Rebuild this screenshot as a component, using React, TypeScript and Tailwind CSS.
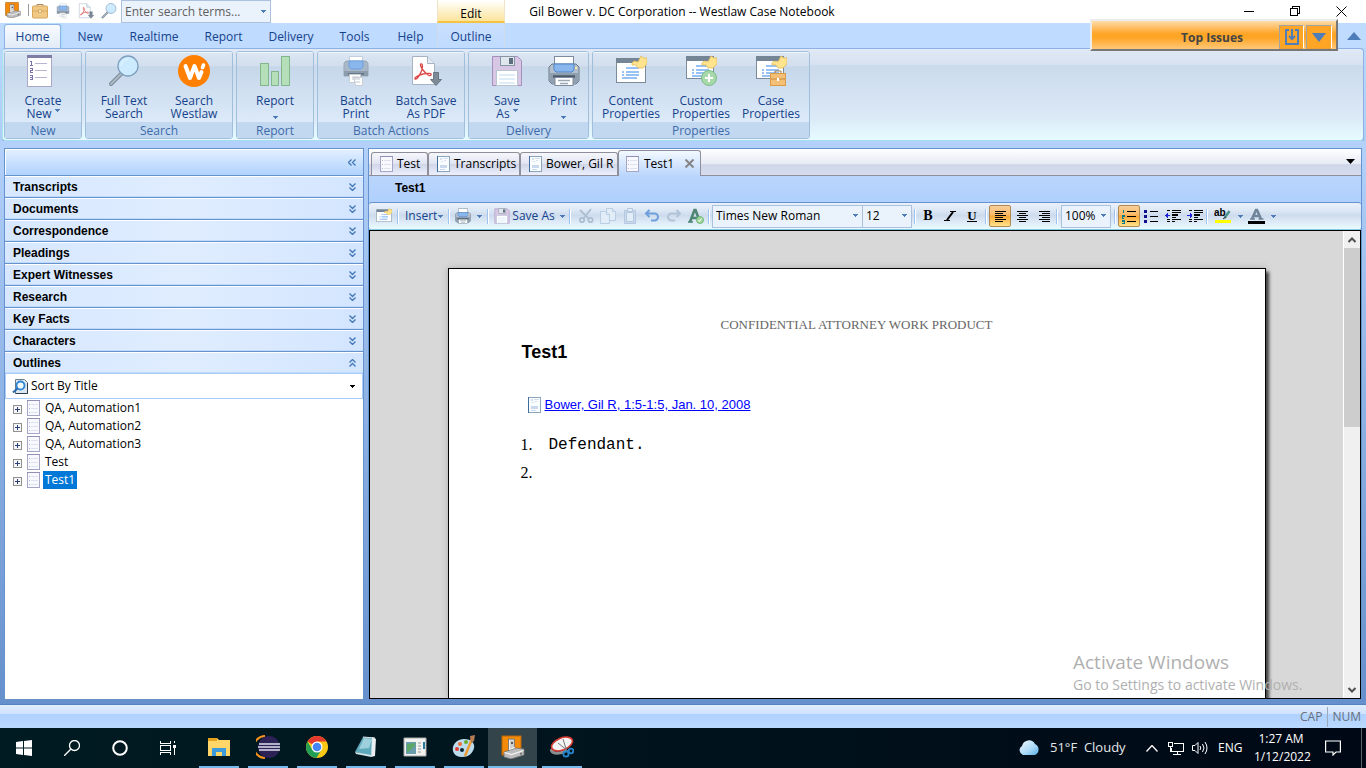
import React from "react";

type IconProps = { className?: string };

const Caret = ({ className = "text-[#4d7cb8]" }: IconProps) => (
  <svg className={`h-[3px] w-[5px] shrink-0 ${className}`} viewBox="0 0 5 3" shapeRendering="crispEdges" fill="currentColor" aria-hidden="true">
    <path d="M0 0h5v1H0zM1 1h3v1H1zM2 2h1v1H2z" />
  </svg>
);

const AppLogo = ({ className = "" }: IconProps) => (
  <svg className={className} viewBox="0 0 24 24" aria-hidden="true">
    <rect x="1" y="1" width="19" height="19" fill="#f58a07" stroke="#b8660a" />
    <rect x="7.500" y="4" width="6" height="12" fill="#cfcfcf" stroke="#6f6f6f" strokeWidth=".8" />
    <path d="M8.500 5v10" stroke="#f4f4f4" />
    <path d="M10 7h2v2h-2z" fill="#555" />
    <path d="M3 17l12-4 8 1v6l-13 4-7-2z" fill="#bdbdbd" stroke="#6f6f6f" strokeWidth=".8" />
    <path d="M3.500 17.500l7 2 12-4M8 14.500l6-2" fill="none" stroke="#f5f5f5" strokeWidth="1.200" />
    <path d="M19 18l2-.6v2l-2 .6z" fill="#777" />
  </svg>
);

const Briefcase = ({ className = "" }: IconProps) => (
  <svg className={className} viewBox="0 0 16 16" aria-hidden="true">
    <path d="M5 3V1.500h6V3" fill="none" stroke="#a8875a" />
    <rect x=".5" y="3" width="15" height="12" rx="1" fill="#f0c987" stroke="#d9a759" />
    <path d="M1 8h14" stroke="#d9a759" />
    <rect x="6.500" y="7" width="3" height="2.500" fill="#fff3d6" stroke="#c9974c" strokeWidth=".7" />
  </svg>
);

const Printer = ({ className = "" }: IconProps) => (
  <svg className={className} viewBox="0 0 32 32" aria-hidden="true">
    <rect x="6.500" y="1.500" width="19" height="10" fill="#fff" stroke="#7b8b9c" />
    <path d="M4 9h24l3 3v14l-3 3H4l-3-3V12z" fill="#b3bfcd" stroke="#6b7a8a" />
    <path d="M6 9h20v6l-2 2H8l-2-2z" fill="#8ab6ee" stroke="#4f83c7" />
    <path d="M1.500 18h29v8l-2.500 2.500H4L1.500 26z" fill="#8f9fb0" />
    <path d="M5 21.500h22" stroke="#4c5a69" strokeWidth="2.500" />
    <rect x="7" y="22.500" width="18" height="8" fill="#fff" stroke="#7b8b9c" />
    <path d="M10 25.500h12M12 28.500h8" stroke="#9aa8b6" strokeWidth="1.500" />
    <path d="M27 12h2v2h-2z" fill="#ffe8a0" />
  </svg>
);

const BatchPrinter = ({ className = "" }: IconProps) => (
  <svg className={className} viewBox="0 0 32 32" aria-hidden="true">
    <path d="M9.500 1.500h13v6h-13z" fill="#fff" stroke="#c3ced9" />
    <path d="M6 6h20l2 2v13H4V8z" fill="#a9b8c8" stroke="#98a8b9" />
    <path d="M9 6h14v6l-2 2H11l-2-2z" fill="#8ab6ee" stroke="#6f9fdc" />
    <path d="M4 16h24v5H4z" fill="#8c9cac" />
    <path d="M8 18h16v2H8z" fill="#68798a" />
    <path d="M9.500 19.500h11v8h-11z" fill="#fff" stroke="#c8ced4" />
    <path d="M13.500 22.500h9v8h-7z" fill="#fff" stroke="#c8ced4" />
    <path d="M12 22h7M12 24h8M14 27h6" stroke="#c0c8d0" />
  </svg>
);

const Magnifier = ({ className = "" }: IconProps) => (
  <svg className={className} viewBox="0 0 32 32" aria-hidden="true">
    <path d="M13 19L3 29" stroke="#7d8c9b" strokeWidth="4" strokeLinecap="round" />
    <path d="M13 19L3 29" stroke="#aebac6" strokeWidth="2" strokeLinecap="round" />
    <circle cx="20" cy="11" r="10" fill="#cdebff" stroke="#7d9ebd" strokeWidth="1.300" />
    <path d="M13 11a7 7 0 0 1 7-7" fill="none" stroke="#e8f6ff" />
  </svg>
);

const PdfDoc = ({ className = "" }: IconProps) => (
  <svg className={className} viewBox="0 0 32 32" aria-hidden="true">
    <path d="M2.500 1.500h15l7 7v21h-22z" fill="#fff" stroke="#a5b3c2" />
    <path d="M17.500 1.500v7h7" fill="#e2ebf4" stroke="#a5b3c2" />
    <path d="M11 9c2-1 2 4 0 8-2 5-5 8-6 7s3-4 8-5 9-1 8 1-5-1-8-5-3-6-2-6z" fill="none" stroke="#dc4545" strokeWidth="1.300" />
    <path d="M23.500 17.500h5v7h3l-5.500 6-5.500-6h3z" fill="#7d8b99" stroke="#596673" strokeWidth=".8" />
  </svg>
);

const NumberedDoc = ({ className = "" }: IconProps) => (
  <svg className={className} viewBox="0 0 32 32" shapeRendering="crispEdges" aria-hidden="true">
    <rect x=".5" y=".5" width="24" height="31" fill="#fff" stroke="#a9a8c5" />
    <rect width="25" height="3" fill="#7e7da6" />
    <path d="M8 8.500h12M8 15.500h12M8 22.500h12" stroke="#b7b6d2" />
    <path d="M4.500 6v4M3 6.500h1M3 10h3M3 13.500h2v2H3.500v2H6M3 20.500h2v2H3M5 22v2H3" fill="none" stroke="#7775a8" />
  </svg>
);

const WestlawMark = ({ className = "" }: IconProps) => (
  <svg className={className} viewBox="0 0 32 32" aria-hidden="true">
    <circle cx="16" cy="16" r="16" fill="#ff8000" />
    <path d="M7.500 11l4.500 12 4.500-12 4.500 12 2.500-6" fill="none" stroke="#fff" strokeWidth="4" strokeLinecap="round" strokeLinejoin="round" />
    <path d="M25.500 10l-1 2.500" stroke="#fff" strokeWidth="3.600" strokeLinecap="round" />
  </svg>
);

const Bars = ({ className = "" }: IconProps) => (
  <svg className={className} viewBox="0 0 32 32" shapeRendering="crispEdges" fill="#b5dfb9" stroke="#82b78b" aria-hidden="true">
    <rect x="1.500" y="8.500" width="8" height="22" />
    <rect x="12.500" y="16.500" width="7" height="14" />
    <rect x="22.500" y="1.500" width="8" height="29" />
  </svg>
);

const Floppy = ({ className = "" }: IconProps) => (
  <svg className={className} viewBox="0 0 32 32" aria-hidden="true">
    <path d="M1.500 1.500h25l4 4v25h-29z" fill="#d7c7e5" stroke="#a58fbc" />
    <rect x="9.500" y="1.500" width="14" height="9" fill="#dfe6ec" stroke="#8796a4" />
    <path d="M18 3h4v6h-4z" fill="#5f6e7c" />
    <rect x="5.500" y="15.500" width="21" height="15" fill="#fff" stroke="#b8c5d3" />
    <path d="M8 20h16M8 24h16M8 28h16" stroke="#bddcf2" />
  </svg>
);

const PropertyWindow = ({ className = "", badge }: IconProps & { badge?: "plus" | "case" }) => (
  <svg className={className} viewBox="0 0 32 32" aria-hidden="true">
    <rect x="1.500" y={badge ? 1.5 : 3.5} width={badge ? 27 : 29} height={badge ? 22 : 24} fill="#fff" stroke="#7b8b9a" />
    <path d={badge ? "M1 1h28v5H1z" : "M1 3h31v5H1z"} fill="#748595" />
    <g transform={badge ? "translate(0 -2)" : undefined}>
      <path d="M11 13h13M11 17h13M11 20h13M7 23h15" stroke="#74aef2" strokeWidth="1.300" />
      <path d="M7 17h2M7 20h2" stroke="#74aef2" strokeWidth="1.300" />
    </g>
    <path d="M17 8l2-2 4 1 3-6 3 2h3v6l-4 4h-5l-2-3h-4z" fill="#ffe38d" stroke="#e1bb58" strokeWidth=".8" />
    {badge === "plus" && (
      <>
        <circle cx="24" cy="23" r="7.500" fill="#a8d9ab" stroke="#7cba85" />
        <path d="M24 19v8M20 23h8" stroke="#fff" strokeWidth="2" />
      </>
    )}
    {badge === "case" && (
      <>
        <path d="M20 18v-2h6v2" fill="none" stroke="#9a7c50" />
        <rect x="15.500" y="18.500" width="15" height="12" fill="#f4c078" stroke="#d99b46" />
        <path d="M16 24h14" stroke="#c98c3b" />
        <path d="M22 23h2v3h-2z" fill="#fff" />
      </>
    )}
  </svg>
);

const OutlineDoc = ({ className = "" }: IconProps) => (
  <svg className={className} viewBox="0 0 13 16" shapeRendering="crispEdges" aria-hidden="true">
    <rect x=".5" y=".5" width="12" height="15" fill="#f7f9fe" stroke="#a5a5c6" />
    <path d="M0 .5h13" stroke="#9190b4" />
    <path d="M4 4.500h7M4 8.500h7M4 12.500h7" stroke="#dde2f0" />
    <path d="M2 4.500h1M2 8.500h1M2 12.500h1" stroke="#b3b8d6" />
  </svg>
);

const TranscriptDoc = ({ className = "" }: IconProps) => (
  <svg className={className} viewBox="0 0 13 16" shapeRendering="crispEdges" aria-hidden="true">
    <rect x=".5" y=".5" width="12" height="15" fill="#fafdff" stroke="#8ba5bd" />
    <path d="M.5 0v16" stroke="#3f6f9f" />
    <path d="M3 2h2v2H3zM6 2h5v1H6zM4 5h2v1H4zM7 4h2v1H7z" fill="#d5e0ec" />
    <path d="M3 9h7v3H3zM3 13h5v1H3z" fill="#c9d8ec" />
  </svg>
);

const TABS = [
  ["New", "w-[56px]"],
  ["Realtime", "w-[72px]"],
  ["Report", "w-[67px]"],
  ["Delivery", "w-[68px]"],
  ["Tools", "w-[59px]"],
  ["Help", "w-[53px]"],
];

type RibbonItem = { lines: string[]; icon: React.ReactNode; caret?: "inline" | "below"; width?: string };
const big = "h-8 w-8";
const GROUPS: { name: string; width: string; items: RibbonItem[] }[] = [
  { name: "New", width: "w-[78px]", items: [{ lines: ["Create", "New"], icon: <NumberedDoc className={big} />, caret: "inline" }] },
  {
    name: "Search",
    width: "w-[148px]",
    items: [
      { lines: ["Full Text", "Search"], icon: <Magnifier className={big} /> },
      { lines: ["Search", "Westlaw"], icon: <WestlawMark className={big} /> },
    ],
  },
  { name: "Report", width: "w-[78px]", items: [{ lines: ["Report"], icon: <Bars className={big} />, caret: "below" }] },
  {
    name: "Batch Actions",
    width: "w-[148px]",
    items: [
      { lines: ["Batch", "Print"], icon: <BatchPrinter className={big} /> },
      { lines: ["Batch Save", "As PDF"], icon: <PdfDoc className={big} /> },
    ],
  },
  {
    name: "Delivery",
    width: "w-[121px]",
    items: [
      { lines: ["Save", "As"], icon: <Floppy className={big} />, caret: "inline" },
      { lines: ["Print"], icon: <Printer className={big} />, caret: "below", width: "w-[43px]" },
    ],
  },
  {
    name: "Properties",
    width: "w-[218px]",
    items: [
      { lines: ["Content", "Properties"], icon: <PropertyWindow className={big} /> },
      { lines: ["Custom", "Properties"], icon: <PropertyWindow className={big} badge="plus" /> },
      { lines: ["Case", "Properties"], icon: <PropertyWindow className={big} badge="case" /> },
    ],
  },
];

function TitleBar() {
  return (
    <header className="flex h-[23px] shrink-0 bg-white">
      <div className="flex min-w-0 flex-1">
        <div className="flex w-[437px] shrink-0 items-start pl-[5px]">
          <AppLogo className="mt-[2px] h-4 w-4" />
          <span className="mt-1 mr-[3px] ml-[7px] h-3 w-px bg-[#9a9a9a]" />
          <div className="flex items-center gap-[7px] pt-[3px]">
            <button type="button" aria-label="Open case"><Briefcase className="h-4 w-4" /></button>
            <button type="button" aria-label="Print"><BatchPrinter className="h-4 w-4" /></button>
            <button type="button" aria-label="Save as PDF"><PdfDoc className="h-4 w-4" /></button>
            <button type="button" aria-label="Find"><Magnifier className="h-4 w-4" /></button>
          </div>
          <div className="ml-1 flex h-[23px] w-[150px] items-center border border-[#abc1de] bg-[#eaf2fb] pr-1">
            <input aria-label="Search terms" placeholder="Enter search terms..." className="w-full min-w-0 bg-transparent pl-[3px] text-[12px] outline-none placeholder:text-[#5f5f5f]" />
            <button type="button" aria-label="Search history"><Caret /></button>
          </div>
        </div>
        <div className="flex w-[68px] shrink-0 items-end justify-center border-x border-b-2 border-[#eee3c4] border-b-[#f5c242] bg-linear-to-b from-white to-[#fce49a] text-[12px] leading-[14px] text-black">
          Edit
        </div>
      </div>
      <h1 className="shrink-0 text-[12px] leading-[23px] text-black">Gil Bower v. DC Corporation -- Westlaw Case Notebook</h1>
      <div className="flex flex-1 justify-end pr-[2px]">
        <button type="button" aria-label="Minimize" className="flex w-[46px] items-center justify-center">
          <svg className="h-[11px] w-[11px]" viewBox="0 0 11 11" shapeRendering="crispEdges"><path d="M0 5.500h10" stroke="#000" /></svg>
        </button>
        <button type="button" aria-label="Restore" className="flex w-[46px] items-center justify-center">
          <svg className="h-[11px] w-[11px]" viewBox="0 0 11 11" shapeRendering="crispEdges" fill="none" stroke="#000"><path d="M.5 2.500h7v7h-7zM2.500 2.500v-2h7v7h-2" /></svg>
        </button>
        <button type="button" aria-label="Close" className="flex w-[46px] items-center justify-center">
          <svg className="h-[11px] w-[11px]" viewBox="0 0 11 11" stroke="#000"><path d="M.5 .5l10 10M10.500 .5l-10 10" /></svg>
        </button>
      </div>
    </header>
  );
}

function RibbonTabs() {
  return (
    <nav className="flex h-[25px] shrink-0 bg-[#bfdbff] pl-1 text-[12px] text-[#15428b]">
      <button type="button" className="mt-px mr-px -mb-px w-[57px] rounded-t-[3px] border border-b-0 border-[#8db2e3] bg-linear-to-b from-[#f8fbff] to-[#e0eaf6] shadow-[1px_0_2px_#9edcf5]">Home</button>
      {TABS.map(([label, width]) => (
        <button type="button" key={label} className={`pt-[2px] ${width}`}>{label}</button>
      ))}
      <button type="button" className="w-[68px] border-x border-[#cfdcea] bg-linear-to-b from-[#c9dfff] to-[#bfdbff] pt-[2px]">Outline</button>
      <button type="button" aria-label="Collapse ribbon" className="mr-[5px] ml-auto">
        <svg className="h-2 w-[14px]" viewBox="0 0 14 8"><path d="M7 0l7 8H0z" fill="#4d7cb8" /></svg>
      </button>
    </nav>
  );
}

function Ribbon() {
  return (
    <section className="mx-[2px] flex h-[93px] shrink-0 gap-[3px] rounded-[4px] border border-t-[#8db2e3] border-r-[#8db2e3] border-b-[#a3dcee] border-l-[#a5e5ee] bg-linear-[180deg,#e0e9f5_0%,#d7e2f1_17%,#cbdaec_18%,#dbe9f7_75%,#e6fcff_100%] pt-[2px] pl-px shadow-[0_1px_0_#7da7cd]">
      {GROUPS.map((group) => (
        <div key={group.name} className={`flex h-[88px] shrink-0 flex-col overflow-hidden rounded-[3px] border border-[#9fbfdb] ${group.width}`}>
          <div className="flex flex-1 justify-center bg-linear-[180deg,#dce6f3_0%,#d3dfee_20%,#c6d7ea_21%,#dceaf9_100%] shadow-[inset_0_1px_0_#eef5fc]">
            {group.items.map((item) => (
              <button type="button" key={item.lines.join(" ")} className={`flex flex-col items-center pt-[3px] text-[12px] leading-[13px] whitespace-nowrap text-[#15428b] ${item.width ?? "w-[70px]"}`}>
                {item.icon}
                <span className="mt-[7px] whitespace-pre-line">
                  {item.lines.join("\n")}
                  {item.caret === "inline" && <span className="ml-[3px] inline-block pb-1 align-bottom"><Caret className="mb-1 text-[#4d7cb8]" /></span>}
                </span>
                {item.caret === "below" && <Caret className="mt-[9px] text-[#4d7cb8]" />}
              </button>
            ))}
          </div>
          <div className="h-4 bg-[#c1d8f0] text-center text-[12px] leading-[17px] text-[#3e6aaa]">{group.name}</div>
        </div>
      ))}
    </section>
  );
}

const SECTIONS = ["Transcripts", "Documents", "Correspondence", "Pleadings", "Expert Witnesses", "Research", "Key Facts", "Characters", "Outlines"];
const OUTLINES = ["QA, Automation1", "QA, Automation2", "QA, Automation3", "Test", "Test1"];

function Sidebar() {
  return (
    <aside className="flex w-[360px] shrink-0 flex-col border border-b-0 border-[#6593cf] bg-white">
      <div className="flex h-[26px] shrink-0 items-center justify-end border-t border-l border-white bg-linear-to-b from-[#e3efff] to-[#afd2ff] pr-[7px]">
        <button type="button" aria-label="Collapse sidebar">
          <svg className="h-[7px] w-2" viewBox="0 0 8 7" fill="none" stroke="#4276b5" strokeWidth="1.300"><path d="M3.500 .5l-3 3 3 3M7.500 .5l-3 3 3 3" /></svg>
        </button>
      </div>
      {SECTIONS.map((name) => (
        <button type="button" key={name} className="flex h-[22px] shrink-0 items-center justify-between border-t border-[#6593cf] bg-linear-to-r from-[#d6e7ff] via-[#e0edff] to-[#d3e5ff] pr-[7px] pl-2 text-left font-['Liberation_Sans',sans-serif] text-[12px] font-bold text-black shadow-[inset_0_1px_0_#fff,inset_0_-1px_0_#c2dafa]">
          {name}
          <svg className={name === "Outlines" ? "h-2 w-[7px] rotate-180" : "h-2 w-[7px]"} viewBox="0 0 7 8" fill="none" stroke="#4276b5" strokeWidth="1.300"><path d="M.5 .5l3 3 3-3M.5 4.500l3 3 3-3" /></svg>
        </button>
      ))}
      <button type="button" className="flex h-[26px] shrink-0 items-center border border-[#a9cdfb] pr-[7px] pl-[6px] text-[12px] text-black">
        <svg className="h-4 w-4" viewBox="0 0 16 16" aria-hidden="true">
          <path d="M3.500 1.500h9l3 3v11h-12z" fill="#dce7f2" stroke="#6f7c8a" />
          <path d="M15.500 5v10.500h-12" fill="none" stroke="#2f3d4b" />
          <circle cx="8.500" cy="7.500" r="4" fill="#effaff" stroke="#2b86d4" strokeWidth="1.800" />
          <path d="M5.500 10.500l-4.500 4" stroke="#2b6cae" strokeWidth="2.200" />
        </svg>
        <span className="ml-[3px]">Sort By Title</span>
        <Caret className="ml-auto text-black" />
      </button>
      <ul className="pl-2 text-[12px] text-black">
        {OUTLINES.map((name) => (
          <li key={name} className="flex h-[18px] items-center">
            <button type="button" aria-label={`Expand ${name}`} className="mt-[2px]">
              <svg className="h-[9px] w-[9px]" viewBox="0 0 9 9" shapeRendering="crispEdges"><rect x=".5" y=".5" width="8" height="8" fill="#f6f6f6" stroke="#919191" /><path d="M2 4.500h5M4.500 2v5" stroke="#28407e" /></svg>
            </button>
            <OutlineDoc className="ml-[5px] h-4 w-[13px]" />
            <span className={name === "Test1" ? "ml-[3px] bg-[#0078d7] px-[2px] leading-[18px] text-white" : "ml-[3px] px-[2px] leading-[18px]"}>{name}</span>
          </li>
        ))}
      </ul>
    </aside>
  );
}

const DOC_TABS = [
  { name: "Test", width: "w-[57px]", outline: true },
  { name: "Transcripts", width: "w-[92px]", outline: false },
  { name: "Bower, Gil R", width: "w-[98px]", outline: false },
];

function DocumentTabs() {
  return (
    <div className="flex h-[27px] shrink-0 items-end border-b border-[#8e8f9b] bg-linear-[180deg,#ffffff_0%,#e6eaf5_58%,#ced6e9_60%,#d6dcec_100%] pl-[2px] text-[12px] text-black">
      {DOC_TABS.map((tab) => (
        <button type="button" key={tab.name} className={`flex h-[23px] items-center gap-1 rounded-t-[3px] border border-b-0 border-[#8e8f9b] bg-linear-[180deg,#f5f7fc_0%,#e1e5f2_48%,#cfd5e8_50%,#eceffc_100%] pl-2 whitespace-nowrap ${tab.width}`}>
          {tab.outline ? <OutlineDoc className="h-4 w-[13px] shrink-0" /> : <TranscriptDoc className="h-4 w-[13px] shrink-0" />}
          {tab.name}
        </button>
      ))}
      <div className="-mb-px flex h-[26px] w-[83px] items-center rounded-t-[3px] border border-b-0 border-[#8e8f9b] bg-linear-to-b from-[#f3f9ff] to-[#bad5fc] pl-[7px]">
        <OutlineDoc className="h-4 w-[13px] shrink-0" />
        <span className="ml-[5px]">Test1</span>
        <button type="button" aria-label="Close tab" className="mr-[6px] ml-auto">
          <svg className="h-[9px] w-[9px]" viewBox="0 0 9 9" stroke="#858585" strokeWidth="2"><path d="M.5 .5l8 8M8.500 .5l-8 8" /></svg>
        </button>
      </div>
      <button type="button" aria-label="Tab list" className="mr-[6px] mb-[11px] ml-auto">
        <svg className="h-[5px] w-[9px]" viewBox="0 0 9 5"><path d="M0 0h9L4.500 5z" /></svg>
      </button>
    </div>
  );
}

const Separator = () => <span className="h-[15px] w-[2px] shrink-0 border-r border-white bg-[#9ec3f0]" />;

function Picker({ label, value, width }: { label: string; value: string; width: string }) {
  return (
    <div className={`relative h-[23px] shrink-0 ${width}`}>
      <select aria-label={label} className="h-full w-full appearance-none border border-[#abc1de] bg-[#eaf2fb] pl-[3px] text-[12px] text-black outline-none">
        <option>{value}</option>
      </select>
      <Caret className="pointer-events-none absolute top-[9px] right-[5px] text-[#4d7cb8]" />
    </div>
  );
}

const ALIGN = {
  left: "M0 .5h11M0 2.500h8M0 4.500h11M0 6.500h8M0 8.500h11M0 10.500h8",
  center: "M0 .5h11M2 2.500h7M0 4.500h11M2 6.500h7M0 8.500h11M2 10.500h7",
  right: "M0 .5h11M3 2.500h8M0 4.500h11M3 6.500h8M0 8.500h11M3 10.500h8",
};

const Tool = ({ label, active, children }: { label: string; active?: boolean; children: React.ReactNode }) => (
  <button
    type="button"
    aria-label={label}
    className={
      active
        ? "flex h-[22px] w-[22px] shrink-0 items-center justify-center rounded-[2px] border border-[#b08a52] bg-linear-[180deg,#f7cf9c_0%,#fbb965_45%,#fba536_50%,#ffe58a_100%]"
        : "flex h-[22px] w-[22px] shrink-0 items-center justify-center"
    }
  >
    {children}
  </button>
);

const AlignIcon = ({ d }: { d: string }) => (
  <svg className="h-[11px] w-[11px]" viewBox="0 0 11 11" stroke="#000" shapeRendering="crispEdges"><path d={d} /></svg>
);

const IndentIcon = ({ flip }: { flip?: boolean }) => (
  <svg className="h-[14px] w-4" viewBox="0 0 16 14" shapeRendering="crispEdges">
    <path d="M2 1.500h3M7 1.500h9M7 3.500h9M7 8.500h4M2 10.500h3M7 10.500h9M2 12.500h3M7 12.500h3" stroke="#000" strokeWidth="1" />
    <path d="M7 5h6v2H7z" />
    <path d={flip ? "M0 6h5v1H0zM3 4h1v5H3zM4 5h1v3H4z" : "M0 6h5v1H0zM1 5h1v3H1zM2 4h1v5H2z"} fill="#2020d8" />
  </svg>
);

function EditorToolbar() {
  return (
    <div className="flex h-[28px] shrink-0 items-center overflow-hidden rounded-[3px] border-t border-b border-t-[#6593cf] border-b-[#84cbe0] bg-linear-[180deg,#eaf1fa_0%,#dce7f5_30%,#cddbed_48%,#dfecf8_75%,#e8fbff_100%] text-[12px] text-[#15428b]">
      <div className="flex w-[343px] shrink-0 items-center pl-[7px]">
        <button type="button" aria-label="Properties"><PropertyWindow className="h-4 w-4" /></button>
        <span className="ml-[5px] flex"><Separator /></span>
        <button type="button" className="ml-[6px] flex items-center gap-px">Insert <Caret /></button>
        <span className="ml-[5px] flex"><Separator /></span>
        <button type="button" aria-label="Print" className="ml-[5px] flex items-center gap-[6px]"><Printer className="h-4 w-4" /><Caret /></button>
        <span className="ml-[5px] flex"><Separator /></span>
        <button type="button" className="ml-[5px] flex items-center gap-[2px] whitespace-nowrap"><Floppy className="h-4 w-4" />Save As <Caret className="ml-[3px] text-[#4d7cb8]" /></button>
        <span className="ml-1 flex"><Separator /></span>
        <div className="ml-auto flex gap-[6px] pr-1">
          <button type="button" aria-label="Cut">
            <svg className="h-4 w-4" viewBox="0 0 16 16" fill="none" stroke="#aebfd2" strokeWidth="1.800"><path d="M2 2l9 9M13 1L5 11" /><circle cx="4" cy="12" r="2.200" /><circle cx="12.500" cy="12" r="2.200" /></svg>
          </button>
          <button type="button" aria-label="Copy">
            <svg className="h-4 w-4" viewBox="0 0 16 16" fill="#e3edf8" stroke="#b9cde3"><path d="M6.500 .5h6l3 3v9h-9z" /><path d="M.5 3.500h6l3 3v9h-9z" /><path d="M12.500 .5v3h3M6.500 3.500v3h3" /></svg>
          </button>
          <button type="button" aria-label="Paste">
            <svg className="h-4 w-4" viewBox="0 0 16 16" fill="#e3edf8" stroke="#b4c9e0"><path d="M2.500 2.500h11v13h-11z" fill="#c9d9eb" /><path d="M4.500 4.500h7v9h-7z" /><path d="M5.500 .5h5v3h-5z" /></svg>
          </button>
          <button type="button" aria-label="Undo">
            <svg className="h-4 w-4" viewBox="0 0 16 16" fill="none" stroke="#6f9fdb" strokeWidth="2"><path d="M5.500 2L2 5.500 5.500 9M2 5.500h8.500a3.500 3.500 0 0 1 0 7H7" /></svg>
          </button>
          <button type="button" aria-label="Redo">
            <svg className="h-4 w-4" viewBox="0 0 16 16" fill="none" stroke="#b1c3d7" strokeWidth="2"><path d="M10.500 2L14 5.500 10.500 9M14 5.500H5.500a3.500 3.500 0 0 0 0 7H9" /></svg>
          </button>
          <button type="button" aria-label="Spelling">
            <svg className="h-4 w-4" viewBox="0 0 16 16" fill="none"><path d="M2 14L6.500 2h1L12 14M4 10h6" stroke="#4e8573" strokeWidth="2.600" /><path d="M0 14h5" stroke="#4e8573" strokeWidth="1.500" /><circle cx="12" cy="12" r="3.500" fill="#9ed69c" stroke="#75b97c" /><path d="M10.500 12l1 1.500 2-3" stroke="#fff" /></svg>
          </button>
        </div>
        <span className="flex pr-[2px]"><Separator /></span>
      </div>
      <div className="flex w-[205px] shrink-0 items-center">
        <Picker label="Font" value="Times New Roman" width="w-[151px]" />
        <span className="-ml-px flex"><Picker label="Font size" value="12" width="w-[50px]" /></span>
        <span className="ml-[2px] flex"><Separator /></span>
      </div>
      <div className="flex shrink-0 items-center font-['Liberation_Serif',serif] text-[14px] leading-4 font-bold text-black">
        <Tool label="Bold">B</Tool>
        <Tool label="Italic"><svg className="h-[10px] w-3" viewBox="0 0 12 10" stroke="#000"><path d="M6 .5h6M0 9.500h6" /><path d="M9 1L3 9" strokeWidth="2" /></svg></Tool>
        <Tool label="Underline"><span className="border-b border-black text-[13px] leading-[11px]">U</span></Tool>
        <span className="flex px-[2px]"><Separator /></span>
        <Tool label="Align left" active><AlignIcon d={ALIGN.left} /></Tool>
        <Tool label="Align center"><AlignIcon d={ALIGN.center} /></Tool>
        <Tool label="Align right"><AlignIcon d={ALIGN.right} /></Tool>
      </div>
      <div className="ml-px flex shrink-0 items-center">
        <Separator />
        <span className="mx-[3px] flex"><Picker label="Zoom" value="100%" width="w-[50px]" /></span>
        <Separator />
      </div>
      <div className="ml-[2px] flex shrink-0 items-center">
        <Tool label="Numbered list" active>
          <svg className="h-[15px] w-4" viewBox="0 0 16 15" shapeRendering="crispEdges"><path d="M6 2.500h9M6 7.500h9M6 12.500h9" stroke="#000" /><path d="M1.500 1h1v3M1 6h2v1H1v2h2M1 11h2v1H1h2v2H1" fill="none" stroke="#0b7c8c" /></svg>
        </Tool>
        <Tool label="Bulleted list">
          <svg className="h-[14px] w-[14px]" viewBox="0 0 14 14" shapeRendering="crispEdges"><path d="M6 2.500h8M6 7.500h8M6 12.500h8" stroke="#000" /><path d="M0 1h3v3H0zM0 6h3v3H0zM0 11h3v3H0z" fill="#10108c" /></svg>
        </Tool>
        <Tool label="Decrease indent"><IndentIcon /></Tool>
        <Tool label="Increase indent"><IndentIcon flip /></Tool>
        <Separator />
        <button type="button" aria-label="Highlight colour" className="ml-[6px] flex items-center gap-[6px]">
          <svg className="h-[18px] w-[18px]" viewBox="0 0 18 18"><path d="M1 13h16v3H1z" fill="#ff0" /><text x="0" y="9" fontSize="10" fontFamily="Liberation Sans" fontWeight="bold">ab</text><path d="M10.500 11l5-7" stroke="#4f8f8c" strokeWidth="2.500" /><path d="M9 12l3-2" stroke="#333" /></svg>
          <Caret />
        </button>
        <button type="button" aria-label="Font colour" className="ml-[5px] flex items-center gap-[6px]">
          <svg className="h-[18px] w-[17px]" viewBox="0 0 17 18"><path d="M0 14h17v3H0z" /><path d="M4 12L8 3h1l4 9M5.500 9h6" fill="none" stroke="#70849a" strokeWidth="2.600" /><path d="M2 12h5M10.500 12h5" stroke="#70849a" strokeWidth="1.600" /></svg>
          <Caret />
        </button>
      </div>
    </div>
  );
}

function Scrollbar() {
  return (
    <div className="flex w-[17px] shrink-0 flex-col border-l border-white bg-[#f0f0f0]" aria-hidden="true">
      <span className="flex h-[17px] items-center justify-center">
        <svg className="h-[6px] w-2" viewBox="0 0 8 6" fill="none" stroke="#505050" strokeWidth="2"><path d="M.5 5L4 1.500 7.500 5" /></svg>
      </span>
      <span className="h-[179px] bg-[#cdcdcd]" />
      <span className="mt-auto flex h-[17px] items-center justify-center">
        <svg className="h-[6px] w-2" viewBox="0 0 8 6" fill="none" stroke="#505050" strokeWidth="2"><path d="M.5 1L4 4.500 7.500 1" /></svg>
      </span>
    </div>
  );
}

function Editor() {
  return (
    <div className="flex min-h-0 flex-1 overflow-hidden border border-black bg-[#d8d8d8]">
      <div className="flex min-w-0 flex-1 justify-center overflow-hidden pt-[37px]">
        <article className="w-[818px] border border-b-0 border-black bg-white px-[72px] pt-12 text-black shadow-[3px_4px_3px_#444,0_0_6px_#aaa]">
          <p className="text-center font-['Liberation_Serif',serif] text-[13px] leading-4 text-[#666]">CONFIDENTIAL ATTORNEY WORK PRODUCT</p>
          <h2 className="mt-[6px] pl-px font-['Liberation_Sans',sans-serif] text-[18px] leading-[26px] font-bold">Test1</h2>
          <p className="mt-8 flex items-center gap-1 pl-[7px] font-['Liberation_Sans',sans-serif] text-[13px] leading-4">
            <TranscriptDoc className="h-4 w-[13px]" />
            <a href="#transcript" className="text-[#0000ff] underline">Bower, Gil R, 1:5-1:5, Jan. 10, 2008</a>
          </p>
          <ol className="mt-[18px] font-['Liberation_Serif',serif] text-[16px] leading-7">
            <li className="flex"><span className="w-7 shrink-0">1.</span><span className="font-['Liberation_Mono',monospace]">Defendant.</span></li>
            <li>2.</li>
          </ol>
        </article>
      </div>
      <Scrollbar />
    </div>
  );
}

const TASKS: { name: string; icon: React.ReactNode }[] = [
  {
    name: "File Explorer",
    icon: <svg className="h-6 w-6" viewBox="0 0 24 24"><path d="M1 3h9l2 2h11v16H1z" fill="#ffd667" /><path d="M1 3h9v3H1z" fill="#e5a21a" /><path d="M5 13h14v8h-4v-4H9v4H5z" fill="#3d9bdb" /></svg>,
  },
  {
    name: "Eclipse",
    icon: <svg className="h-6 w-6" viewBox="0 0 24 24"><path d="M9 1a11 11 0 0 0 0 22" fill="none" stroke="#f7941e" strokeWidth="2" /><circle cx="13" cy="12" r="11" fill="#2c2255" /><path d="M3 9h21M2 12h22M3 15h21" stroke="#e2dff0" strokeWidth="1.500" /></svg>,
  },
  {
    name: "Chrome",
    icon: <svg className="h-6 w-6" viewBox="0 0 24 24"><circle cx="12" cy="12" r="11" fill="#fbc816" /><path d="M12 12L2.500 6.500A11 11 0 0 1 21.500 6.500H12z" fill="#e3382e" /><path d="M2.500 6.500A11 11 0 0 0 11.500 23l5-8.500L12 12 7.500 15z" fill="#219d54" /><circle cx="12" cy="12" r="5.500" fill="#fff" /><circle cx="12" cy="12" r="4.300" fill="#4285f4" /></svg>,
  },
  {
    name: "Notepad",
    icon: <svg className="h-6 w-6" viewBox="0 0 24 24"><path d="M9 2l12 1-4 18L1 17z" fill="#5fa9bd" /><path d="M18 2l4 2-1 17-4 1z" fill="#e9eef0" /><path d="M1 17l16 3v2L2 19z" fill="#cfe2e6" /><path d="M10 3l8 1-3 9-10 1z" fill="#b9e0ea" opacity=".7" /><path d="M9 2l12 1" stroke="#dfe6e8" /></svg>,
  },
  {
    name: "System viewer",
    icon: <svg className="h-6 w-6" viewBox="0 0 24 24"><path d="M1 3h22v18H1z" fill="#f2f2f0" stroke="#aaa" /><path d="M3 7h10v12H3z" fill="#6b9cae" /><path d="M4 18V9l8-1v3z" fill="#5da868" /><path d="M15 8h3M15 11h3M15 14h3M15 17h3" stroke="#999" /><path d="M20 7h2v7h-2z" fill="#287b9f" /></svg>,
  },
  {
    name: "Paint",
    icon: <svg className="h-6 w-6" viewBox="0 0 24 24"><path d="M12 4c8 0 11 5 10 9s-4 9-12 9S0 16 1 12s5-8 11-8z" fill="#bcdcee" /><circle cx="5" cy="14" r="2" fill="#e43d30" /><circle cx="8" cy="9" r="2" fill="#ef6b2f" /><circle cx="14" cy="7" r="2" fill="#67ad2e" /><circle cx="10" cy="15" r="2" fill="#0c2533" /><path d="M20 4l-7 17" stroke="#ec9b35" strokeWidth="2.500" /><path d="M18 1l5-1-1 6-3 2z" fill="#b67d55" /></svg>,
  },
  { name: "Westlaw Case Notebook", icon: <AppLogo className="h-6 w-6" /> },
  {
    name: "Snipping Tool",
    icon: <svg className="h-6 w-6" viewBox="0 0 24 24"><path d="M1 14c1 6 10 5 16 1" fill="none" stroke="#8a8f92" strokeWidth="3" /><ellipse cx="12" cy="9" rx="11" ry="6" transform="rotate(-22 12 9)" fill="#f4f4f4" stroke="#d43b32" strokeWidth="1.600" /><path d="M13 4l4 13M8 8l10 8" stroke="#777" /><circle cx="16" cy="19" r="2.600" fill="none" stroke="#2686cd" strokeWidth="1.800" /><circle cx="21" cy="16" r="2.300" fill="none" stroke="#2686cd" strokeWidth="1.800" /></svg>,
  },
];

const taskButton = "flex h-10 w-12 shrink-0 items-center justify-center";

function Taskbar() {
  return (
    <footer className="flex h-10 shrink-0 bg-linear-to-r from-[#001b22] via-[#00131c] to-[#000816] text-white">
      <button type="button" aria-label="Start" className={taskButton}>
        <svg className="h-4 w-4" viewBox="0 0 16 16" fill="#fff"><path d="M0 2l7-1v6.500H0zM8 1l8-1v7.500H8zM0 8.500h7V15l-7-1zM8 8.500h8V16l-8-1z" /></svg>
      </button>
      <button type="button" aria-label="Search" className={taskButton}>
        <svg className="h-4 w-4" viewBox="0 0 16 16" fill="none" stroke="#fff" strokeWidth="1.300"><circle cx="10.500" cy="5.500" r="5" /><path d="M7 9L0 16" /></svg>
      </button>
      <button type="button" aria-label="Cortana" className={taskButton}>
        <svg className="h-4 w-4" viewBox="0 0 16 16" fill="none" stroke="#fff" strokeWidth="2"><circle cx="8" cy="8" r="6.800" /></svg>
      </button>
      <button type="button" aria-label="Task view" className={taskButton}>
        <svg className="h-4 w-4" viewBox="0 0 16 16" fill="none" stroke="#fff" shapeRendering="crispEdges"><path d="M.5 1v2.500h10V1M.5 15v-2.500h10V15M.5 5.500h10v5H.5zM14.500 1v2M14.500 8v7" /><path d="M13 5h3v3h-3z" fill="#fff" stroke="none" /></svg>
      </button>
      <div className="ml-[2px] flex">
        {TASKS.map((task) => {
          const current = task.name === "Westlaw Case Notebook";
          return (
            <button type="button" key={task.name} aria-label={task.name} className={current ? "flex w-[49px] flex-col items-center bg-[#33444b]" : "flex w-[49px] flex-col items-center"}>
              <span className="flex h-[38px] items-center">{task.icon}</span>
              <span className={current ? "h-[2px] w-full bg-[#76b9ed]" : "h-[2px] w-10 bg-[#76b9ed]"} />
            </button>
          );
        })}
      </div>
      <div className="ml-auto flex shrink-0 items-center text-[12px]">
        <svg className="h-[18px] w-[22px]" viewBox="0 0 22 18">
          <defs><linearGradient id="cloud" x2="1" y2="1"><stop stopColor="#f1faff" /><stop offset=".6" stopColor="#a9d8f7" /><stop offset="1" stopColor="#58aee9" /></linearGradient></defs>
          <path d="M5 16a5 5 0 0 1-1-9 7 7 0 0 1 13-2 6 6 0 0 1 0 11z" fill="url(#cloud)" />
        </svg>
        <span className="ml-[10px] w-[78px] text-[13px] whitespace-pre text-[#e4e8ea]">51°F  Cloudy</span>
        <button type="button" aria-label="Show hidden icons" className="ml-[18px]">
          <svg className="h-[7px] w-3" viewBox="0 0 12 7" fill="none" stroke="#fff" strokeWidth="1.300"><path d="M.5 6.500l5.500-6 5.500 6" /></svg>
        </button>
        <svg className="ml-[10px] h-[15px] w-4" viewBox="0 0 16 15" fill="none" stroke="#fff" shapeRendering="crispEdges"><path d="M5.500 2.500h10v8H3.500v-4M.5 1.500h4v4h-4zM2.500 6v5M9.500 11v3M5 13.500h8" /></svg>
        <svg className="ml-2 h-[14px] w-4" viewBox="0 0 16 14" fill="none" stroke="#fff"><path d="M.5 4.500H3l3-3v11l-3-3H.5zM8 5q1.500 2 0 4M10.500 3q3 4 0 8M13 1q4 6 0 12" /></svg>
        <span className="ml-[10px] w-6">ENG</span>
        <span className="ml-3 w-[54px] text-center leading-[18px]">1:27 AM<br />1/12/2022</span>
        <button type="button" aria-label="Notifications" className="ml-[17px]">
          <svg className="h-4 w-4" viewBox="0 0 16 16" fill="none" stroke="#fff" strokeWidth="1.200"><path d="M.6 1h14.800v11H11l-3 3v-3H.6z" /></svg>
        </button>
        <span className="mr-1 ml-5 h-10 w-px bg-[#59636c]" />
      </div>
    </footer>
  );
}

export default function App() {
  return (
    <div className="relative flex h-screen flex-col overflow-hidden bg-linear-to-b from-[#bfdbff] to-[#6690cc] font-['Open_Sans','Noto_Sans',sans-serif]">
      <TitleBar />
      <RibbonTabs />
      <Ribbon />
      <main className="flex min-h-0 flex-1 gap-1 bg-linear-to-b from-[#b3d1fa] to-[#6690cc] px-1 pt-[7px] pb-[5px]">
        <Sidebar />
        <section className="flex min-w-0 flex-1 flex-col border-x border-t border-[#6593cf]">
          <DocumentTabs />
          <h2 className="h-[26px] shrink-0 bg-linear-to-b from-[#bad5fc] to-[#afd0fd] pl-[26px] font-['Liberation_Sans',sans-serif] text-[12px] leading-[25px] font-bold text-black">Test1</h2>
          <EditorToolbar />
          <Editor />
        </section>
      </main>
      <div className="flex h-6 shrink-0 items-center justify-end border-t border-[#5682bf] bg-linear-[180deg,#e1edff_0%,#cfe2ff_38%,#afd1ff_40%,#bbd9ff_100%] pr-[5px] text-[12px] text-[#65707c]">
        <span className="pr-[5px]">CAP</span>
        <span className="h-5 w-px bg-[#9ba8b8]" />
        <span className="pl-1">NUM</span>
      </div>
      <Taskbar />

      <div className="absolute top-[19px] right-7 flex h-8 w-[248px] items-end justify-end border-2 border-t-[#ececec] border-r-[#777] border-b-[#777] border-l-[#ececec] bg-linear-[180deg,#ffdcab_0%,#ffa526_45%,#ffa526_60%,#ffc878_100%] text-[12px] font-bold text-[#444]">
        <span className="mr-[36px] leading-[22px]">Top Issues</span>
        <button type="button" aria-label="Dock" className="flex h-6 w-[25px] items-center justify-center border border-[#a3a3a3] border-r-white border-b-[#eea033] bg-[#ffa526]">
          <svg className="h-4 w-[14px]" viewBox="0 0 14 16" fill="none" stroke="#4e7db8" strokeWidth="2"><path d="M4 1H1v14h12V1h-3M7 0v10M4 7l3 3 3-3" /></svg>
        </button>
        <button type="button" aria-label="Options" className="mr-1 ml-[2px] flex h-6 w-[26px] items-center justify-center border border-[#a3a3a3] border-r-white border-b-[#eea033] bg-[#ffa526]">
          <svg className="h-[9px] w-[14px]" viewBox="0 0 14 9"><path d="M0 0h14L7 9z" fill="#4e7db8" /></svg>
        </button>
      </div>

      <div className="pointer-events-none absolute right-[53px] bottom-[73px] w-[240px] text-[#b0b0b0]">
        <p className="text-[19px] leading-[26px]">Activate Windows</p>
        <p className="text-[14px] leading-5">Go to Settings to activate Windows.</p>
      </div>
    </div>
  );
}
